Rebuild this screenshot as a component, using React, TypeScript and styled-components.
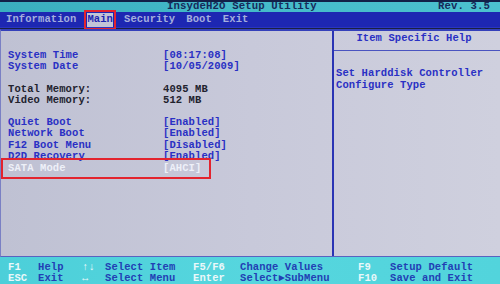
import React, { FC } from "react";
import styled, { createGlobalStyle } from "styled-components";

const GlobalStyle = createGlobalStyle`
	html, body {
		margin: 0;
		padding: 0;
		background: #1a2040;
	}
	body {
		width: 500px;
		height: 284px;
		overflow: hidden;
		font-family: "Liberation Mono", "DejaVu Sans Mono", monospace;
	}
`;

type SetupRow = { label: string; value: string; kind: "item" | "info" | "selected" };

const groups: SetupRow[][] = [
	[
		{ label: "System Time", value: "[08:17:08]", kind: "item" },
		{ label: "System Date", value: "[10/05/2009]", kind: "item" },
	],
	[
		{ label: "Total Memory:", value: "4095 MB", kind: "info" },
		{ label: "Video Memory:", value: "512 MB", kind: "info" },
	],
	[
		{ label: "Quiet Boot", value: "[Enabled]", kind: "item" },
		{ label: "Network Boot", value: "[Enabled]", kind: "item" },
		{ label: "F12 Boot Menu", value: "[Disabled]", kind: "item" },
		{ label: "D2D Recovery", value: "[Enabled]", kind: "item" },
		{ label: "SATA Mode", value: "[AHCI]", kind: "selected" },
	],
];

const menu = ["Information", "Main", "Security", "Boot", "Exit"];

const keys = [
	["F1", "Help", "↑↓", "Select Item", "F5/F6", "Change Values", "F9", "Setup Default"],
	["ESC", "Exit", "↔", "Select Menu", "Enter", "Select►SubMenu", "F10", "Save and Exit"],
];

const App: FC = () => {
	return (
		<>
			<GlobalStyle />
			<Screen>
				<TitleBar>
					<Title>InsydeH2O Setup Utility</Title>
					<Rev>Rev. 3.5</Rev>
				</TitleBar>
				<MenuBar>
					{menu.map((m) => (
						<MenuItem key={m} $active={m === "Main"}>
							{m}
						</MenuItem>
					))}
				</MenuBar>
				<Body>
					<LeftPanel>
						{groups.map((g, i) => (
							<Group key={i}>
								{g.map((r) => (
									<Row key={r.label} $kind={r.kind}>
										<span>{r.label}</span>
										<span>{r.value}</span>
									</Row>
								))}
							</Group>
						))}
					</LeftPanel>
					<RightPanel>
						<HelpHeader>Item Specific Help</HelpHeader>
						<HelpText>
							Set Harddisk Controller
							<br />
							Configure Type
						</HelpText>
					</RightPanel>
				</Body>
				<KeyBar>
					{keys.map((row) =>
						row.map((t, i) =>
							i % 2 === 0 ? <Key key={t}>{t}</Key> : <KeyDesc key={t}>{t}</KeyDesc>
						)
					)}
				</KeyBar>
			</Screen>
		</>
	);
};

export default App;

const Screen = styled.div`
	width: 500px;
	height: 284px;
	display: flex;
	flex-direction: column;
	font-size: 10.5px;
	font-weight: bold;
	line-height: 11.2px;
	letter-spacing: 0.1px;
	white-space: nowrap;
`;

const TitleBar = styled.div`
	height: 10px;
	border-top: 2px solid #122048;
	background: linear-gradient(90deg, #3aaebf, #46bccb 60%, #4cc2cf);
	display: flex;
	align-items: center;
	padding: 0 10px 0 167px;
	color: #162a5a;
	font-size: 10.7px;
`;

const Title = styled.span`
	flex: 1;
`;

const Rev = styled.span``;

const MenuBar = styled.div`
	height: 16px;
	background: #1d27b2;
	display: flex;
	align-items: center;
	gap: 11px;
	padding-left: 6px;
	box-shadow: inset 0 -1px 0 #2a36c0;
`;

const MenuItem = styled.span<{ $active?: boolean }>`
	padding: 1px 0;
	color: ${(p) => (p.$active ? "#1d27b2" : "#a4aede")};
	background: ${(p) => (p.$active ? "#c2c4d6" : "transparent")};
	outline: ${(p) => (p.$active ? "2px solid #e3242e" : "none")};
	outline-offset: 1px;
`;

const Body = styled.div`
	flex: 1;
	display: flex;
	background: linear-gradient(90deg, #bfc1d3, #c8c9da 50%, #cfd0de);
	border-top: 2px solid #3440ba;
	border-left: 1px solid #7a80c4;
	border-bottom: 1px solid #5a62c0;
	margin-top: 1px;
`;

const LeftPanel = styled.div`
	width: 331px;
	padding-top: 19px;
	display: flex;
	flex-direction: column;
	gap: 11.2px;
	border-right: 2px solid #2a34b4;
`;

const Group = styled.div`
	display: flex;
	flex-direction: column;
`;

const Row = styled.div<{ $kind: SetupRow["kind"] }>`
	width: 198px;
	margin-left: 5px;
	padding-left: 2px;
	display: grid;
	grid-template-columns: 155px auto;
	color: ${(p) =>
		p.$kind === "info" ? "#22222e" : p.$kind === "selected" ? "#eef0f8" : "#2a30c4"};
	outline: ${(p) => (p.$kind === "selected" ? "2px solid #e3242e" : "none")};
	outline-offset: 3px;
	margin-top: ${(p) => (p.$kind === "selected" ? "1px" : "0")};
`;

const RightPanel = styled.div`
	flex: 1;
	display: flex;
	flex-direction: column;
	color: #2a30c4;
`;

const HelpHeader = styled.div`
	height: 17px;
	padding-top: 2px;
	text-align: center;
	padding-right: 6px;
	border-bottom: 1px solid #4a54c0;
`;

const HelpText = styled.div`
	padding: 16px 0 0 2px;
	line-height: 12px;
`;

const KeyBar = styled.div`
	height: 22px;
	padding: 5px 0 0 8px;
	background: linear-gradient(90deg, #4ccfd9, #56d6de 50%, #52d4dc);
	display: grid;
	grid-template-columns: 30px 44px 23px 88px 47px 118px 32px 1fr;
	grid-auto-rows: 11px;
	line-height: 11px;
`;

const Key = styled.span`
	color: #eaf8fa;
`;

const KeyDesc = styled.span`
	color: #2240b4;
`;
